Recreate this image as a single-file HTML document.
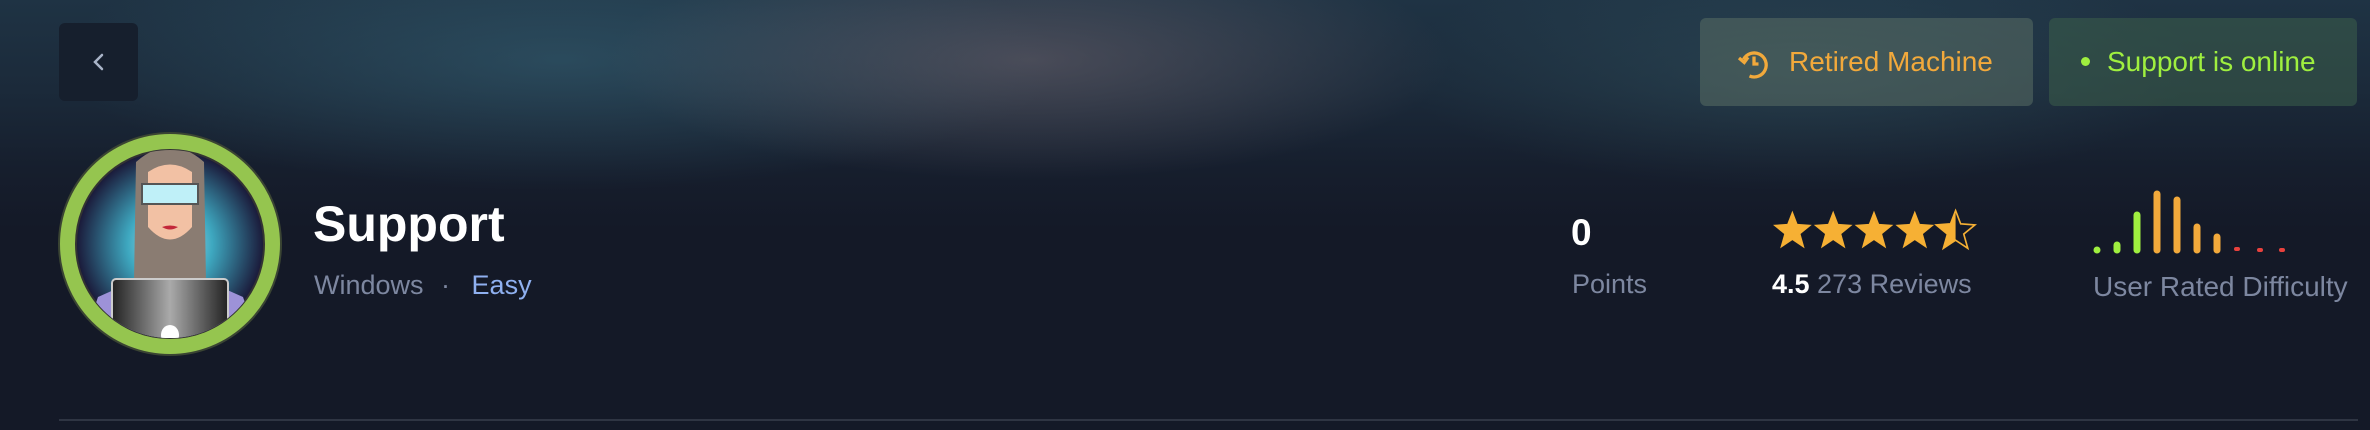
<!DOCTYPE html>
<html><head><meta charset="utf-8"><style>
*{margin:0;padding:0;box-sizing:border-box}
body{width:2370px;height:430px;background:#141927;font-family:"Liberation Sans",sans-serif;position:relative;overflow:hidden}
.bg{position:absolute;left:0;top:0;width:2370px;height:430px;
background:
radial-gradient(ellipse 420px 120px at 1030px 60px,rgba(110,100,110,.55),transparent),
radial-gradient(ellipse 500px 130px at 560px 60px,rgba(60,110,130,.45),transparent),
radial-gradient(ellipse 400px 120px at 1800px 70px,rgba(60,100,110,.35),transparent),
linear-gradient(180deg,#1f3344 0px,#1b2a3a 90px,#161e2d 170px,#141927 230px);}
.abs{position:absolute}
.back{left:59px;top:23px;width:79px;height:78px;background:#161f2d;border-radius:6px}
.btn{top:18px;height:88px;border-radius:6px;font-size:28px;line-height:88px}
.t{color:#fff;font-weight:bold;font-size:50px}
.s{font-size:27px;color:#7d87a0}
</style></head><body>
<div class="bg"></div>
<div class="abs back"><svg width="79" height="78"><path d="M43 32 L36 39 L43 46" stroke="#a9b4c8" stroke-width="2.5" fill="none" stroke-linecap="round"/></svg></div>
<div class="abs btn" style="left:1700px;width:333px;background:rgba(90,110,100,.55);color:#f2a93b"><svg class="abs" style="left:36px;top:28px" width="36" height="36" viewBox="0 0 24 24"><path d="M5 9 A8 8 0 1 1 9 20" stroke="#f2a93b" stroke-width="2.2" fill="none"/><path d="M2 8 L5.5 11 L8 7.5" stroke="#f2a93b" stroke-width="2.2" fill="none"/><path d="M12 7 V12 H15" stroke="#f2a93b" stroke-width="2.2" fill="none"/></svg><span class="abs" style="left:89px">Retired Machine</span></div>
<div class="abs btn" style="left:2049px;width:308px;background:rgba(60,95,75,.55);color:#9fef3f"><span class="abs" style="left:32px;top:39px;width:9px;height:9px;border-radius:50%;background:#9fef3f"></span><span class="abs" style="left:58px">Support is online</span></div>

<svg class="abs" style="left:58px;top:132px" width="224" height="224" viewBox="0 0 224 224">
<defs><radialGradient id="g" cx="50%" cy="50%" r="50%"><stop offset="0" stop-color="#bff3ff"/><stop offset=".45" stop-color="#3ea8c0"/><stop offset="1" stop-color="#1a1838"/></radialGradient>
<linearGradient id="lp" x1="0" x2="1"><stop offset="0" stop-color="#222"/><stop offset=".5" stop-color="#aaa"/><stop offset="1" stop-color="#222"/></linearGradient>
<clipPath id="c"><circle cx="112" cy="112" r="94"/></clipPath></defs>
<circle cx="112" cy="112" r="111" fill="#95c54f" stroke="#3a4433" stroke-width="2"/>
<circle cx="112" cy="112" r="94" fill="url(#g)" stroke="#333" stroke-width="2"/>
<g clip-path="url(#c)">
<path d="M20 224 L40 165 L85 145 L140 145 L185 165 L205 224Z" fill="#9d92d8"/>
<path d="M92 150 L112 175 L132 150 L132 110 L92 110Z" fill="#f4f4f4"/>
<path d="M78 30 Q112 0 146 30 L148 150 L76 150Z" fill="#8a7c72"/>
<path d="M90 40 Q112 25 134 40 L134 95 Q112 120 90 95Z" fill="#f2c1a4"/>
<rect x="84" y="52" width="56" height="20" fill="#bff0f8" stroke="#555" stroke-width="2"/>
<path d="M104 95 Q112 100 120 95 Q112 92 104 95Z" fill="#c3273a"/>
<rect x="54" y="147" width="116" height="90" rx="4" fill="url(#lp)" stroke="#ccc" stroke-width="2"/>
<ellipse cx="112" cy="203" rx="9" ry="10" fill="#fff"/>
</g></svg>

<div class="abs t" style="left:313px;top:195px">Support</div>
<div class="abs s" style="left:314px;top:270px">Windows <span style="margin:0 14px 0 10px">·</span> <span style="color:#8fb0f0">Easy</span></div>

<div class="abs" style="left:1571px;top:212px;color:#fff;font-size:37px;font-weight:bold">0</div>
<div class="abs s" style="left:1572px;top:269px">Points</div>

<svg class="abs" style="left:1773px;top:208px" width="204" height="46" viewBox="0 0 200 42">
<defs><path id="st" d="M19 1 L24 14 L38 15 L27 24 L31 38 L19 30 L7 38 L11 24 L0 15 L14 14Z"/></defs>
<use href="#st" x="0" fill="#f6b034"/><use href="#st" x="40" fill="#f6b034"/><use href="#st" x="80" fill="#f6b034"/><use href="#st" x="120" fill="#f6b034"/>
<use href="#st" x="160" fill="none" stroke="#f6b034" stroke-width="1.6"/>
<path d="M179 1 L179 30 L167 38 L171 24 L160 15 L174 14Z" fill="#f6b034"/>
</svg>
<div class="abs s" style="left:1772px;top:269px"><span style="color:#fff;font-weight:bold">4.5</span> 273 Reviews</div>

<svg class="abs" style="left:2090px;top:185px" width="200" height="70">
<g stroke-linecap="round" stroke-width="7">
<line x1="7" y1="65" x2="7" y2="65" stroke="#9fef3f"/>
<line x1="27" y1="60" x2="27" y2="65" stroke="#9fef3f"/>
<line x1="47" y1="30" x2="47" y2="65" stroke="#9fef3f"/>
<line x1="67" y1="9" x2="67" y2="65" stroke="#f2a93b"/>
<line x1="87" y1="15" x2="87" y2="65" stroke="#f2a93b"/>
<line x1="107" y1="42" x2="107" y2="65" stroke="#f2a93b"/>
<line x1="127" y1="52" x2="127" y2="65" stroke="#f2a93b"/>
</g>
<g stroke="#e8413d" stroke-width="4" stroke-linecap="round">
<line x1="146" y1="64" x2="148" y2="64"/><line x1="169" y1="65" x2="171" y2="65"/><line x1="191" y1="65" x2="193" y2="65"/></g>
</svg>
<div class="abs s" style="left:2093px;top:271px;font-size:28px">User Rated Difficulty</div>

<div class="abs" style="left:59px;top:419px;width:2299px;height:2px;background:#2f3543"></div>
</body></html>
